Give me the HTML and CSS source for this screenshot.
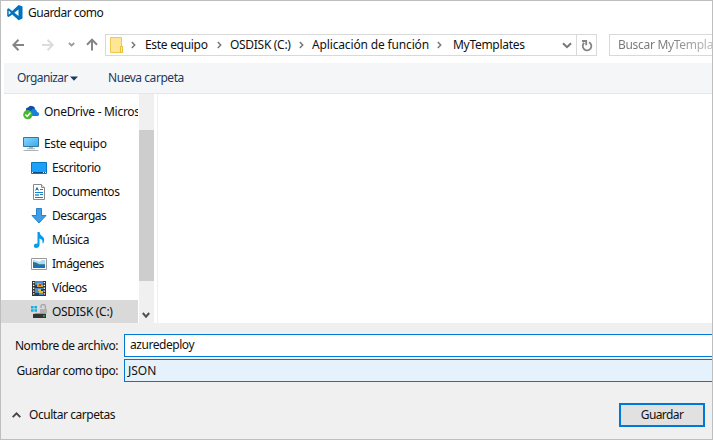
FILE: index.html
```html
<!DOCTYPE html>
<html lang="es">
<head>
<meta charset="utf-8">
<title>Guardar como</title>
<link rel="stylesheet" href="styles.css">
</head>
<body>
<div class="dialog">
  <header class="titlebar">
    <svg class="logo" width="16" height="16" viewBox="0 0 16 16"><path fill="#0072c0" fill-rule="evenodd" d="M11.6 0 15.5 1.5V13.6L11.6 15.3 5.2 9.4 1.7 12.1.2 11.3V4L1.7 3.2 5.2 5.9ZM11.5 4.5 7.4 7.7 11.5 10.9ZM1.7 5.6V9.8L3.8 7.7Z"/></svg>
    <span class="t-title">Guardar como</span>
  </header>
  <nav class="navbar">
    <svg class="arrows" width="92" height="20" viewBox="0 0 92 20" fill="none" stroke-width="2"><path stroke="#858585" d="M12 10H1.5M6.5 4.8 1.3 10l5.2 5.2"/><path stroke="#dcdcdc" d="M30 10h10.5M35.5 4.8 40.7 10l-5.2 5.2"/><path stroke="#999" stroke-width="1.8" d="m57 8 2.6 2.6L62.200 8"/><path stroke="#858585" d="M80 15.500V5M75 9.800 80 4.600l5 5.200"/></svg>
    <div class="address">
      <svg class="folder" width="14" height="16" viewBox="0 0 14 16"><path fill="#ffe694" stroke="#edc951" d="M.5.500h11v9h1v6H.5Z"/><path fill="#fff0b0" stroke="#e8bd36" d="M10.500 9.500h2v6h-2z"/></svg>
      <svg class="sep s1" width="5" height="8" viewBox="0 0 5 8"><path d="m.8 1 2.900 3L.8 7"/></svg>
      <span class="t-pc">Este equipo</span>
      <svg class="sep s2" width="5" height="8" viewBox="0 0 5 8"><path d="m.8 1 2.900 3L.8 7"/></svg>
      <span class="t-disk">OSDISK (C:)</span>
      <svg class="sep s3" width="5" height="8" viewBox="0 0 5 8"><path d="m.8 1 2.900 3L.8 7"/></svg>
      <span class="t-app">Aplicación de función</span>
      <svg class="sep s4" width="5" height="8" viewBox="0 0 5 8"><path d="m.8 1 2.900 3L.8 7"/></svg>
      <span class="t-tpl">MyTemplates</span>
      <svg class="drop" width="10" height="7" viewBox="0 0 10 7"><path fill="none" stroke="#777" stroke-width="2" d="m1 1.200 4 4 4-4"/></svg>
      <div class="refresh"><svg width="12" height="13" viewBox="0 0 12 13"><path fill="none" stroke="#858585" stroke-width="1.800" d="M8 3.200a4.300 4.300 0 1 1-4.800.6M1 2h4.200v4.200"/></svg></div>
    </div>
    <div class="search"><span class="t-search">Buscar MyTemplates</span></div>
  </nav>
  <div class="toolbar">
    <span class="t-org">Organizar</span>
    <svg class="caret" width="8" height="5" viewBox="0 0 8 5"><path fill="#1e395b" d="M0 .500h8L4 4.700Z"/></svg>
    <span class="t-new">Nueva carpeta</span>
  </div>
  <main class="browser">
    <ul class="tree">
      <li class="root cloud">
        <svg width="16" height="16" viewBox="0 0 16 16"><path fill="#0a4fae" d="M3 8V6.500Q2.600 3.500 5 3.500q2-3 5-1.200Q12 3 12 5L5 9Z"/><path fill="#1680db" d="M6 12V9q0-2 2-2 1-3 3.800-2Q14 6 14 8q2.300.2 2 2.500-.2 1.700-2 1.500Z"/><circle cx="4.800" cy="10.700" r="4.600" fill="#46b82f"/><path fill="none" stroke="#fff" stroke-width="1.500" d="m2.400 10.600 1.800 1.900 3.200-3.700"/></svg>
        <span class="t-one">OneDrive - Micros</span>
      </li>
      <li class="root">
        <svg width="16" height="16" viewBox="0 0 16 16"><defs><linearGradient id="screen" x2="1" y2="1"><stop stop-color="#8bd8ff"/><stop offset="1" stop-color="#35a9ef"/></linearGradient></defs><path fill="url(#screen)" stroke="#397796" d="M.5 1.500h15v9H.5Z"/><path fill="#a7b5bf" d="M6 11h4v1.200h2v1H4v-1h2ZM1 14h14l1 1H0Z"/></svg>
        <span class="t-root">Este equipo</span>
      </li>
      <li>
        <svg width="16" height="16" viewBox="0 0 16 16"><path fill="#1ba1fc" stroke="#0878bc" d="M.5 2.500h15v11H.5Z"/><path stroke="#064c82" d="M1 12.500h14"/><path stroke="#fff" stroke-dasharray="1 1" d="M1 12.500h2M12 12.500h3"/></svg>
        <span class="t-esc">Escritorio</span>
      </li>
      <li>
        <svg width="16" height="16" viewBox="0 0 16 16"><path fill="#fff" stroke="#898989" d="M2.500.500h8l3 3v12h-11Z"/><path fill="#eee" stroke="#898989" d="M10.500.500v3h3"/><path stroke="#1681c4" fill="none" d="m4.500 6.500 1.500-3 1.500 3M5 5.500h2M9 5.500h3M4 8.500h8M9 10.500h3M4 13.500h8M4 10.500h4"/><path fill="#65aadb" d="M4 10h4v2H4z"/></svg>
        <span class="t-doc">Documentos</span>
      </li>
      <li>
        <svg width="16" height="16" viewBox="0 0 16 16"><path fill="#419ee6" stroke="#2383cf" stroke-linejoin="round" d="M5.500.500h5v7H15L8 15 1 7.500h4.500Z"/></svg>
        <span class="t-down">Descargas</span>
      </li>
      <li>
        <svg width="16" height="16" viewBox="0 0 16 16"><path fill="#069bed" d="M6.500 0h2q.5 3 3 4.500 3 2.500.8 6.700h-.9q1-3.500-2.900-4.700V13q-.3 3-3.500 3-2.300 0-2.200-2 .3-2.500 3.700-2.400Z"/></svg>
        <span class="t-mus">Música</span>
      </li>
      <li>
        <svg width="16" height="16" viewBox="0 0 16 16"><path fill="#fff" stroke="#999" d="M.5 2.500h15v11H.5Z"/><path fill="#add9f5" d="M2 4h12v8H2Z"/><path fill="#e8f7ff" d="M4 4h7L9 6 4 5Z"/><path fill="#2f7185" d="M2 6q4 .2 6 2.200h6V10H2Z"/><path fill="#1473bb" d="M2 10h12v2H2Z"/></svg>
        <span class="t-img">Imágenes</span>
      </li>
      <li>
        <svg width="16" height="16" viewBox="0 0 16 16"><path fill="#333" d="M1 1h14v15H1Z"/><path stroke="#fff" stroke-width="1.300" stroke-dasharray="1.300 1.500" d="M2.700 2v14M13.300 2v14"/><path fill="#478fcd" d="M4 1h8v6H4Zm0 7h8v7H4Z"/><path fill="#e69d27" d="M6 3h4v2h2v2H6Z"/><path fill="#a64a26" d="M8 4h2v2H8Z"/><path fill="#e9bb39" d="M7 9h3v2h2v2H8v-2H7Z"/><path fill="#22415e" d="M4 5h2v2H4Zm0 8h4v2H4Zm6-4h2v2h-2Z"/></svg>
        <span class="t-vid">Vídeos</span>
      </li>
      <li class="selected">
        <svg width="16" height="16" viewBox="0 0 16 16"><path fill="#14aee3" d="M0 2h2.600v2.500H0Zm3.400 0H6v2.500H3.400ZM0 5.300h2.600v2.500H0Zm3.400 0H6v2.500H3.400Z"/><path fill="none" stroke="#a5a5a5" stroke-width="1.300" d="M10 4V2.500q0-2 2.200-2t2.200 2V5"/><path fill="#b2b2b2" d="M9 5h7v4.500H9Z"/><path fill="#999" d="m3 10 1-1h10l1 1Z"/><path fill="#333" d="M2 10h13v4H2Z"/><path fill="#42e44a" d="M12 11.500h2v1h-2z"/></svg>
        <span class="t-osd">OSDISK (C:)</span>
      </li>
    </ul>
    <div class="scrollbar"><div class="thumb"></div><svg width="8" height="7" viewBox="0 0 8 7"><path fill="none" stroke="#505050" stroke-width="2" d="m.8 1 3.200 3.700L7.200 1"/></svg></div>
    <div class="files"></div>
  </main>
  <footer class="form">
    <div class="field name"><label><span class="t-name">Nombre de archivo:</span></label><div class="input"><span class="t-az">azuredeploy</span></div></div>
    <div class="field type"><label><span class="t-type">Guardar como tipo:</span></label><div class="input"><span class="t-json">JSON</span></div></div>
    <div class="actions">
      <svg width="9" height="6" viewBox="0 0 9 6"><path fill="none" stroke="#444" stroke-width="1.800" d="m.7 5.200 3.800-3.900 3.800 3.900"/></svg>
      <span class="t-hide">Ocultar carpetas</span>
      <button><span class="t-save">Guardar</span></button>
    </div>
  </footer>
</div>
</body>
</html>
```
FILE: styles.css
```css
* { box-sizing: border-box; }
body { margin: 0; background: #fff; }
.dialog { width: 713px; height: 440px; border: 1px solid #bebebe; background: #fff; overflow: hidden; display: flex; flex-direction: column; font: 12px/16px "Noto Sans", "Open Sans", sans-serif; color: #111; }
svg { display: block; flex: none; }
span { display: block; white-space: nowrap; flex: none; letter-spacing: -.45px; }
.titlebar { height: 30px; display: flex; padding: 3px 0 0 6px; }
.logo { margin-top: 1px; }
.t-title { margin-left: 5px; margin-top: 1px; letter-spacing: -.5px; }
.navbar { height: 32px; display: flex; padding-top: 3px; }
.arrows { margin: 1px 0 0 11px; }
.address { width: 492px; height: 22px; margin-left: 1px; border: 1px solid #d9d9d9; display: flex; align-items: center; flex: none; }
.folder { margin-left: 4px; }
.sep path { fill: none; stroke: #777; stroke-width: 1.5; }
.s1 { margin-left: 7px; }
.t-pc { margin-left: 9px; width: 72px; letter-spacing: -.3px; }
.t-disk { margin-left: 8px; width: 69px; letter-spacing: -.3px; }
.t-app { margin-left: 8px; width: 125px; letter-spacing: -.15px; }
.t-tpl { margin-left: 11px; width: 109px; letter-spacing: -.3px; }
.refresh { margin-left: auto; width: 20px; height: 20px; border-left: 1px solid #d9d9d9; display: grid; place-items: center; flex: none; }
.search { flex: 1; min-width: 0; height: 22px; margin-left: 12px; border: 1px solid #d9d9d9; border-right: 0; padding: 2px 0 0 8px; overflow: hidden; }
.t-search { letter-spacing: -.3px; background: linear-gradient(90deg, #777 45px, #bbb 94px); background-clip: text; color: transparent; }
.toolbar { height: 31px; margin-left: 3px; background: #f4f6f8; border-bottom: 1px solid #e5e7e9; display: flex; align-items: center; color: #1e395b; padding-left: 13px; }
.t-org { width: 52px; letter-spacing: -.6px; }
.caret { margin-left: 1px; }
.t-new { margin-left: 30px; }
.browser { height: 229px; display: flex; }
.tree { list-style: none; width: 137px; margin: 0; padding: 6px 0 0; overflow: hidden; flex: none; }
.tree li { height: 24px; display: flex; align-items: center; gap: 5px; padding-left: 30px; }
.tree li.root { padding-left: 22px; }
.tree li.cloud { margin-bottom: 8px; }
.tree li.selected { background: #d9d9d9; }
.t-one { letter-spacing: -.3px; }
.t-root, .t-osd { letter-spacing: -.3px; }
.t-img { letter-spacing: -.55px; }
.scrollbar { margin-left: 1px; width: 15px; background: #f0f0f0; padding-top: 36px; }
.thumb { height: 151px; background: #cdcdcd; }
.scrollbar svg { margin: 31px 0 0 3px; }
.files { flex: 1; border-left: 1px solid #f0f0f0; margin-left: 3px; }
.form { flex: 1; background: #f0f0f0; padding-top: 11px; }
.field { display: flex; align-items: center; height: 23px; }
.field label { width: 117px; display: flex; justify-content: flex-end; margin-right: 6px; }
.input { flex: 1; height: 23px; background: #fff; border: 1px solid #0078d7; border-right: 0; padding: 2px 0 0 5px; }
.type { margin-top: 2px; }
.type .input { background: #e5f1fb; padding: 3px 0 0 3px; }
.t-json { letter-spacing: 0; }
.actions { display: flex; align-items: center; margin-top: 20px; height: 26px; padding-left: 11px; }
.t-hide { margin-left: 8px; }
button { margin: 0 7px 0 auto; width: 86px; height: 24px; border: 2px solid #0078d7; background: #e1e1e1; padding: 0; font: inherit; color: inherit; display: grid; place-items: center; }
.t-save { letter-spacing: -.6px; }
```
